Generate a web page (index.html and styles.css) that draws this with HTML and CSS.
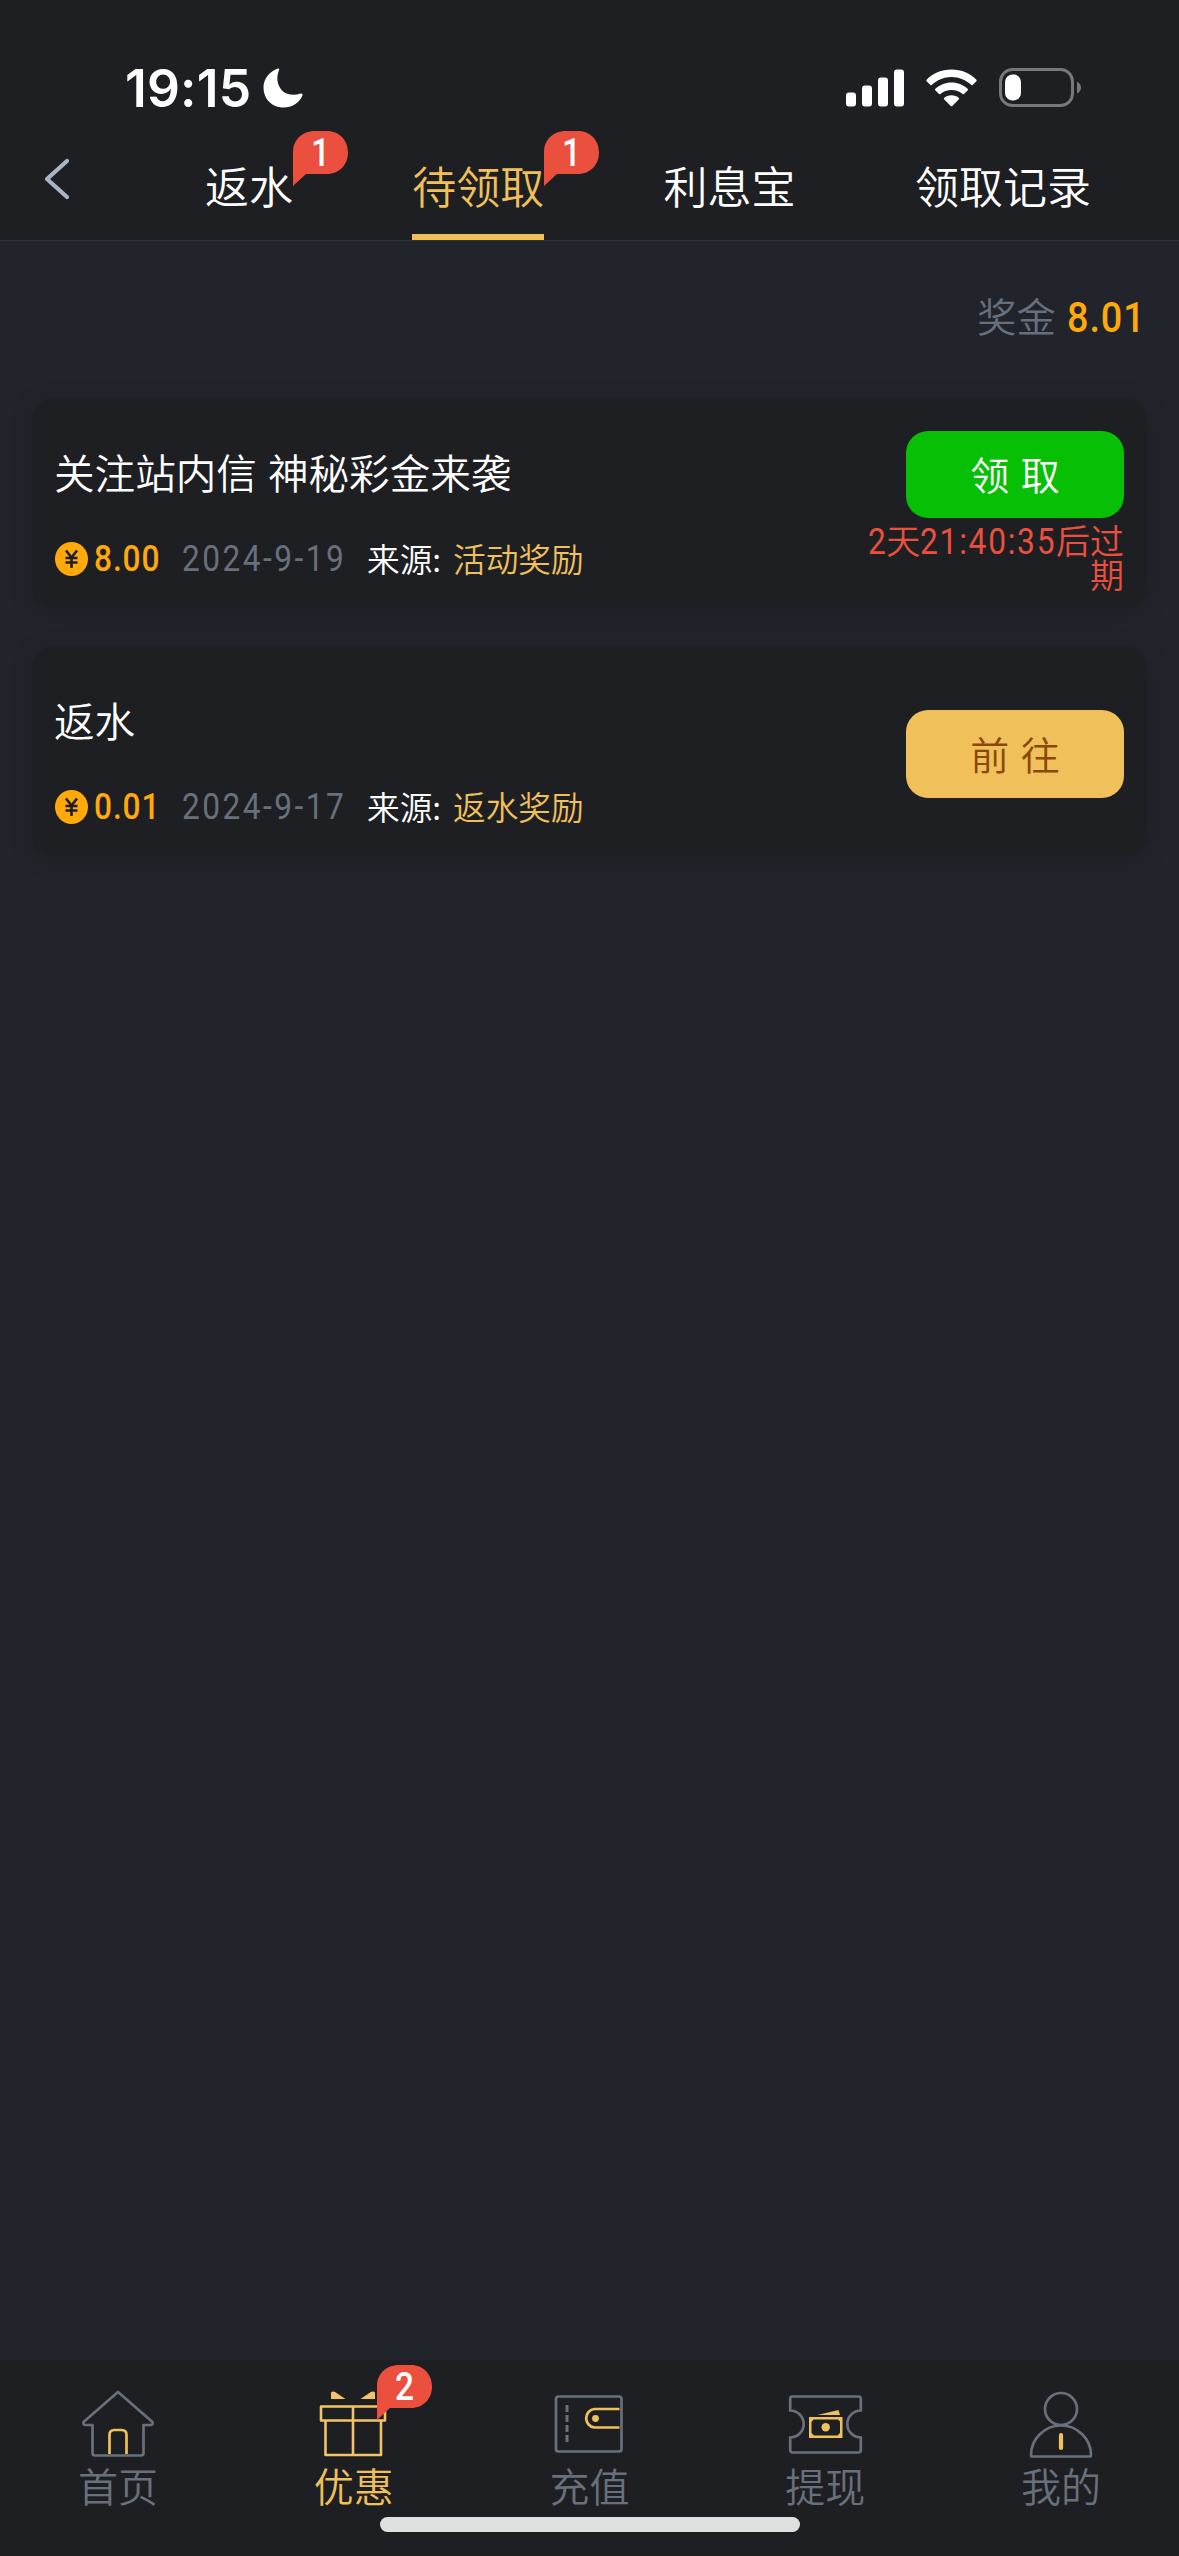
FILE: index.html
```html
<!DOCTYPE html>
<html lang="zh-CN">
<head>
<meta charset="utf-8">
<title>待领取</title>
<link rel="stylesheet" href="styles.css">
</head>
<body>
<div class="screen">
  <header class="header">
    <div class="status">
      <div class="status-left">
        <span class="clock">19:15</span>
        <svg class="moon" width="40" height="40" viewBox="0 0 40 40"><path fill="#fff" d="M15 .6C16 .2 16.600 1 16 2.100C13 10 14 17 19 22.500C23.500 27 31 28 37.500 25.600C39 25.200 39.900 26 39.400 27.500C36.500 35 29 39.500 20.500 39.500C9 39.500.5 31 .5 19.500C.5 11 6.500 3.500 15 .6Z"/></svg>
      </div>
      <div class="status-right">
        <svg class="signal" width="58" height="38" viewBox="0 0 58 38" fill="#fff"><rect x="0" y="23.500" width="10" height="14" rx="3"/><rect x="16" y="16.500" width="10" height="21" rx="3"/><rect x="32" y="8.500" width="10" height="29" rx="3"/><rect x="48" y="0.500" width="10" height="37" rx="3"/></svg>
        <svg class="wifi" width="51" height="38" viewBox="0 0 51 38" fill="#fff"><path d="M25.500 .5C35.500 .5 44.500 4.500 50.400 10.800Q51 11.500 50.400 12.200L46.600 16Q46 16.500 45.300 16C40 11 33.200 8 25.500 8S11 11 5.700 16Q5 16.500 4.400 16L.6 12.200Q0 11.500.6 10.800C6.500 4.500 15.500.5 25.500.5Z"/><path d="M25.500 13.500C31.800 13.500 37.500 16 41.800 20Q42.300 20.600 41.800 21.200L38 25Q37.300 25.600 36.600 25C33.500 22.400 29.800 20.900 25.500 20.900S17.500 22.400 14.400 25Q13.700 25.600 13 25L9.200 21.200Q8.700 20.600 9.200 20C13.500 16 19.200 13.500 25.500 13.500Z"/><path d="M25.500 26.300C28.500 26.300 31 27.400 32.900 29Q33.500 29.600 32.900 30.200L26.300 37Q25.500 37.700 24.700 37L18.100 30.200Q17.500 29.600 18.100 29C20 27.400 22.500 26.300 25.500 26.300Z"/></svg>
        <svg class="battery" width="83" height="40" viewBox="0 0 83 40"><rect x="1.500" y="1.500" width="72" height="36" rx="12" fill="none" stroke="#77787b" stroke-width="3"/><path d="M78 13.500Q82 15.500 82 19.500T78 25.500Z" fill="#77787b"/><rect x="6" y="6.500" width="16" height="26" rx="7.500" fill="#fff"/></svg>
      </div>
    </div>
    <nav class="tabs">
      <svg class="back" width="26" height="42" viewBox="0 0 26 42"><path d="M23 3L3 21L23 39" fill="none" stroke="#a9b5c4" stroke-width="4.200" stroke-linecap="round" stroke-linejoin="round"/></svg>
      <a class="tab">返水<span class="badge"><svg viewBox="0 0 55 55" width="55" height="55"><path d="M0 21.500C0 9 9 0 22 0H34C46 0 55 9 55 21.500S46 43 34 43H13L0 55Z" fill="#eb4f3e"/></svg><b>1</b></span></a>
      <a class="tab active">待领取<span class="badge"><svg viewBox="0 0 55 55" width="55" height="55"><path d="M0 21.500C0 9 9 0 22 0H34C46 0 55 9 55 21.500S46 43 34 43H13L0 55Z" fill="#eb4f3e"/></svg><b>1</b></span></a>
      <a class="tab">利息宝</a>
      <a class="tab">领取记录</a>
    </nav>
  </header>

  <main class="content">
    <div class="bonus"><span class="bonus-label">奖金</span><span class="bonus-value">8.01</span></div>

    <section class="card">
      <div class="info">
        <h2 class="title">关注站内信 神秘彩金来袭</h2>
        <div class="meta">
          <svg class="coin" width="33" height="34" viewBox="0 0 33 34"><ellipse cx="16.500" cy="17" rx="16.500" ry="17" fill="#ffa90a"/><path d="M11 8.500L16.500 15.500L22 8.500M10.500 16H22.500M10.500 20.500H22.500M16.500 15.500V26" fill="none" stroke="#1e1f23" stroke-width="2.600"/></svg>
          <span class="amount">8.00</span><span class="date">2024-9-19</span><span class="from">来源:</span><span class="source">活动奖励</span>
        </div>
      </div>
      <div class="action">
        <button class="btn claim">领 取</button>
        <p class="expire"><span class="num day">2</span>天<span class="num time">21:40:35</span>后过<br>期</p>
      </div>
    </section>

    <section class="card">
      <div class="info">
        <h2 class="title">返水</h2>
        <div class="meta">
          <svg class="coin" width="33" height="34" viewBox="0 0 33 34"><ellipse cx="16.500" cy="17" rx="16.500" ry="17" fill="#ffa90a"/><path d="M11 8.500L16.500 15.500L22 8.500M10.500 16H22.500M10.500 20.500H22.500M16.500 15.500V26" fill="none" stroke="#1e1f23" stroke-width="2.600"/></svg>
          <span class="amount">0.01</span><span class="date">2024-9-17</span><span class="from">来源:</span><span class="source">返水奖励</span>
        </div>
      </div>
      <div class="action center">
        <button class="btn go">前 往</button>
      </div>
    </section>
  </main>

  <footer class="bottom">
    <a class="item">
      <svg width="76" height="70" viewBox="0 0 76 70" fill="none" stroke="#68707c" stroke-width="2.700" stroke-linejoin="round"><path d="M38 3L3.500 33Q3 36 5 36H12.500V64Q12.500 66.500 15 66.500H61Q63.500 66.500 63.500 64V36H71Q73 36 72.500 33Z"/><path d="M29.500 65V46Q29.500 41 34.500 41H41.500Q46.500 41 46.500 46V65" stroke="#f0c05a"/></svg>
      <span>首页</span>
    </a>
    <a class="item on">
      <svg width="76" height="70" viewBox="1.500 0 76 70" fill="none" stroke="#f2c467" stroke-width="2.600" stroke-linejoin="round"><rect x="6.500" y="17.500" width="64" height="14"/><path d="M11 31.500V66H66.500V31.500M38.500 17.500V66"/><path d="M16.500 10V3.500Q18 1.500 21 3.200L31 10ZM60.500 10V3.500Q59 1.500 56 3.200L46 10Z" fill="#f2c467" stroke="none"/></svg>
      <span>优惠</span>
      <i class="badge nav-badge"><svg viewBox="0 0 55 55" width="55" height="55"><path d="M0 21.500C0 9 9 0 22 0H34C46 0 55 9 55 21.500S46 43 34 43H13L0 55Z" fill="#eb4f3e"/></svg><b>2</b></i>
    </a>
    <a class="item">
      <svg width="76" height="70" viewBox="0.500 -1 76 70" fill="none" stroke="#68707c" stroke-width="2.700"><rect x="5.500" y="6.500" width="65.500" height="55" rx="2.500"/><path d="M16.500 15V52" stroke-dasharray="7 3" stroke-width="3"/><path d="M69 19H44A9.300 9.300 0 0 0 44 37.500H69" stroke="#f0c05a"/><circle cx="45" cy="28.500" r="3.400" fill="#f0c05a" stroke="none"/></svg>
      <span>充值</span>
    </a>
    <a class="item">
      <svg width="76" height="70" viewBox="-.5 -1.500 76 70" fill="none" stroke="#68707c" stroke-width="2.700"><path d="M5 6H71Q73.300 6 73.300 8V20A13.500 13.500 0 0 0 73.300 47V59.500Q73.300 62 71 62H5Q2.700 62 2.700 59.500V47A13.500 13.500 0 0 0 2.700 20V8Q2.700 6 5 6Z"/><path d="M21.500 26.500H55V47.500H21.500ZM26 29L24 31.500V42.500L26.500 45H50L52.500 42.500V31L50.500 29Z" fill="#f0c05a" fill-rule="evenodd" stroke="none"/><path d="M30 24.500L51 19.500L52.500 24.500Z" fill="#f0c05a" stroke="none"/><circle cx="38.200" cy="36.800" r="4.200" fill="#f0c05a" stroke="none"/></svg>
      <span>提现</span>
    </a>
    <a class="item">
      <svg width="76" height="70" viewBox="0.500 -1 76 70" fill="none" stroke="#68707c" stroke-width="2.700" stroke-linejoin="round"><circle cx="38.500" cy="19" r="16"/><path d="M38.500 35.500C55 35.500 68.500 49 68.500 65Q68.500 66.500 67 66.500H10Q8.500 66.500 8.500 65C8.500 49 22 35.500 38.500 35.500Z"/><path d="M38.500 45V58" stroke="#f0c05a" stroke-width="4.200" stroke-linecap="round"/></svg>
      <span>我的</span>
    </a>
    <div class="home-bar"></div>
  </footer>
</div>
</body>
</html>
```
FILE: styles.css
```css
* { box-sizing: border-box; }
body { margin: 0; background: #21242b; font-family: "Noto Sans CJK SC", sans-serif; font-weight: 350; color: #fff; }
.screen { width: 1179px; height: 2556px; display: flex; flex-direction: column; overflow: hidden; background: #21242b; }

.header { height: 241px; background: #1e1f23; border-bottom: 1px solid #303640; display: flex; flex-direction: column; }
.status { height: 131px; padding: 46px 97px 0 125px; display: flex; justify-content: space-between; }
.status-left, .status-right { height: 84px; display: flex; align-items: center; }
.clock { font: 600 51.500px/86px Inter, sans-serif; letter-spacing: 0.200px; width: 138px; white-space: nowrap; }
.status-right { gap: 22px; }

.tabs { flex: 1; display: flex; align-items: stretch; padding-left: 44px; }
.back { flex: none; margin: 27px 135px 0 0; }
.tab { flex: none; position: relative; font-size: 44px; line-height: 108px; height: 109px; margin-right: 119.300px; white-space: nowrap; }
.tab:last-child { margin-right: 0; }
.tab.active { color: #f0c05a; border-bottom: 6px solid #f0c05a; }
.badge { position: absolute; left: 100%; top: 0; width: 55px; height: 55px; font-style: normal; }
.badge svg { display: block; }
.badge b { position: absolute; left: 0; top: 0; width: 55px; text-align: center; font: 500 38px/44px Roboto, sans-serif; color: #fff; transform: scaleX(.88); }

.content { flex: 1; padding: 42px 32px 0; }
.bonus { height: 68px; margin-bottom: 48px; display: flex; justify-content: flex-end; align-items: center; gap: 11px; padding-right: 4px; line-height: 68px; }
.bonus-label { font-size: 39.500px; line-height: 64px; height: 68px; color: #68707c; }
.bonus-value { width: 76px; font-family: Roboto, sans-serif; font-size: 43px; font-weight: 500; letter-spacing: 1px; color: #ffa90a; transform: scaleX(.88); transform-origin: left; }

.card { height: 209px; margin-bottom: 39px; padding: 0 23px 0 22px; border-radius: 22px; background: #1e1f23; box-shadow: 0 3px 18px rgba(28, 28, 28, .5); display: flex; justify-content: space-between; }
.title { margin: 42px 0 0; font-size: 40.600px; font-weight: 350; word-spacing: 2px; line-height: 61px; height: 60px; white-space: nowrap; }
.meta { margin-top: 33px; padding-left: 1px; height: 50px; display: flex; align-items: center; white-space: nowrap; }
.amount, .date { flex: none; transform: scaleX(.88); transform-origin: left; }
.amount { margin-left: 6px; width: 88px; font: 500 36px/52px Roboto, sans-serif; letter-spacing: 1px; color: #ffa90a; }
.date { width: 185px; font: 400 36px/52px Roboto, sans-serif; letter-spacing: 2.800px; color: #68707c; }
.from, .source { font-size: 32.700px; height: 50px; line-height: 47px; }
.from { width: 86px; }
.source { color: #f0c05a; }
.action { width: 290px; padding-top: 32px; display: flex; flex-direction: column; align-items: flex-end; }
.action.center { padding-top: 63px; }
.btn { width: 218px; height: 87px; border: 0; border-radius: 22px; padding: 0 0 2px; font: 350 39px/84px "Noto Sans CJK SC", sans-serif; word-spacing: 3px; }
.claim { padding-bottom: 4px; background: #07bf05; color: #fff; }
.go { height: 88px; background: #f0c05a; color: #8b4708; }
.expire { margin: 5px 0 0; font-size: 34px; line-height: 34px; text-align: right; color: #eb4f3e; white-space: nowrap; }
.num { display: inline-block; height: 34px; line-height: 38px; vertical-align: top; font-family: Roboto, sans-serif; font-size: 36px; font-weight: 400; letter-spacing: 2px; transform: scaleX(.88); transform-origin: left; }
.day { margin-right: -4px; }
.time { margin-right: -19px; }

.bottom { position: relative; height: 196px; background: #1e1f23; display: flex; }
.item { position: relative; flex: 1; display: flex; flex-direction: column; align-items: center; padding-top: 29px; font-size: 40px; line-height: 56px; color: #68707c; }
.item span { margin-top: -2px; }
.item.on { color: #f0c05a; }
.item svg { display: block; }
.nav-badge { left: 141px; top: 5px; }
.home-bar { position: absolute; left: 380px; top: 157px; width: 420px; height: 15px; border-radius: 8px; background: #dfe1e1; }
```
